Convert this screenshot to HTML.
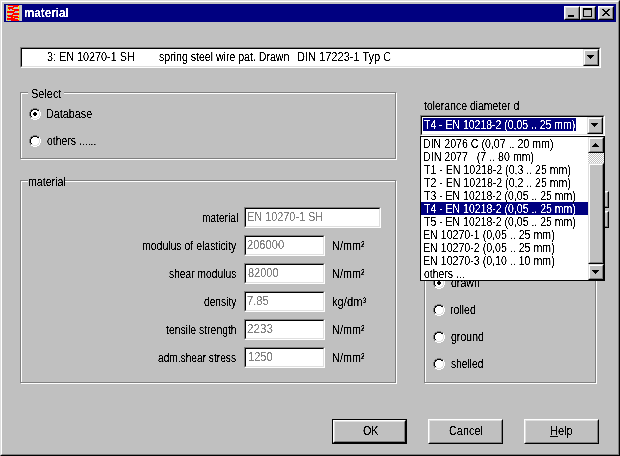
<!DOCTYPE html><html><head><meta charset="utf-8"><title>material</title><style>
html,body{margin:0;padding:0;background:#c0c0c0;}
body{width:620px;height:456px;position:relative;overflow:hidden;font-family:"Liberation Sans",sans-serif;font-size:11px;line-height:13px;color:#000;}
.a{position:absolute;box-sizing:border-box;}
.t{position:absolute;white-space:pre;height:14px;line-height:14px;font-size:12px;}
.t>span{display:inline-block;transform-origin:0 0;white-space:pre;}
.b{font-weight:bold;}
.t{filter:url(#bw);}
.win{left:0;top:0;width:620px;height:456px;background:#c0c0c0;border-style:solid;border-width:1px;border-color:#dfdfdf #000 #000 #dfdfdf;}
.win2{left:1px;top:1px;width:618px;height:454px;border-style:solid;border-width:1px;border-color:#fff #808080 #808080 #fff;}
.title{left:4px;top:4px;width:612px;height:18px;background:#000080;}
.cb{width:16px;height:14px;background:#c0c0c0;border-style:solid;border-width:1px;border-color:#fff #000 #000 #fff;}
.cb i{position:absolute;left:0;top:0;width:12px;height:10px;border-style:solid;border-width:1px;border-color:#dfdfdf #808080 #808080 #dfdfdf;display:block;}
.sunk{border-style:solid;border-width:1px;border-color:#808080 #fff #fff #808080;background:#fff;}
.sunk>i{position:absolute;left:0;top:0;right:0;bottom:0;border-style:solid;border-width:1px;border-color:#000 #dfdfdf #dfdfdf #000;display:block;}
.btn{background:#c0c0c0;border-style:solid;border-width:1px;border-color:#fff #000 #000 #fff;}
.btn>i{position:absolute;left:0;top:0;right:0;bottom:0;border-style:solid;border-width:1px;border-color:#dfdfdf #808080 #808080 #dfdfdf;display:block;}
.sbtn{background:#c0c0c0;border-style:solid;border-width:1px;border-color:#dfdfdf #000 #000 #dfdfdf;}
.sbtn>i{position:absolute;left:0;top:0;right:0;bottom:0;border-style:solid;border-width:1px;border-color:#fff #808080 #808080 #fff;display:block;}
.grp{border:1px solid #808080;box-shadow:1px 1px 0 #fff, inset 1px 1px 0 #fff;}
.gl{background:#c0c0c0;height:3px;}
.sel{background:#000080;}
.track{background-image:conic-gradient(#fff 25%,#c0c0c0 0 50%,#fff 0 75%,#c0c0c0 0);background-size:2px 2px;}
svg{position:absolute;display:block;}
</style></head><body>
<svg width="0" height="0" style="position:absolute"><filter id="bw" x="-2%" y="-10%" width="104%" height="120%" color-interpolation-filters="sRGB"><feComponentTransfer><feFuncA type="linear" slope="5" intercept="-1.7"/></feComponentTransfer></filter></svg>
<div class="a win"></div><div class="a win2"></div>
<div class="a title"></div>
<svg style="left:6px;top:5px" width="16" height="16" viewBox="0 0 16 16" shape-rendering="crispEdges"><rect width="16" height="16" fill="#ff0000"/><rect x="0" y="0" width="1" height="1" fill="#c8c8c8"/><rect x="1" y="0" width="1" height="1" fill="#b4b4b8"/><rect x="13" y="0" width="1" height="1" fill="#b4b4b8"/><rect x="14" y="0" width="2" height="1" fill="#c8c8c8"/><rect x="0" y="1" width="1" height="1" fill="#c8c8c8"/><rect x="1" y="1" width="1" height="1" fill="#b4b4b8"/><rect x="2" y="1" width="1" height="1" fill="#ffff00"/><rect x="3" y="1" width="4" height="1" fill="#b4c4d4"/><rect x="12" y="1" width="1" height="1" fill="#ffff00"/><rect x="13" y="1" width="1" height="1" fill="#b4b4b8"/><rect x="14" y="1" width="2" height="1" fill="#c8c8c8"/><rect x="0" y="2" width="1" height="1" fill="#c8c8c8"/><rect x="1" y="2" width="1" height="1" fill="#b4b4b8"/><rect x="8" y="2" width="4" height="1" fill="#b4c4d4"/><rect x="12" y="2" width="1" height="1" fill="#ffff00"/><rect x="13" y="2" width="1" height="1" fill="#b4b4b8"/><rect x="14" y="2" width="2" height="1" fill="#c8c8c8"/><rect x="0" y="3" width="1" height="1" fill="#c8c8c8"/><rect x="1" y="3" width="1" height="1" fill="#b4b4b8"/><rect x="7" y="3" width="1" height="1" fill="#ffff00"/><rect x="8" y="3" width="4" height="1" fill="#b4c4d4"/><rect x="12" y="3" width="1" height="1" fill="#ffff00"/><rect x="13" y="3" width="1" height="1" fill="#b4b4b8"/><rect x="14" y="3" width="2" height="1" fill="#c8c8c8"/><rect x="0" y="4" width="1" height="1" fill="#c8c8c8"/><rect x="1" y="4" width="1" height="1" fill="#b4b4b8"/><rect x="2" y="4" width="1" height="1" fill="#ffff00"/><rect x="4" y="4" width="2" height="1" fill="#b4c4d4"/><rect x="13" y="4" width="1" height="1" fill="#b4b4b8"/><rect x="14" y="4" width="2" height="1" fill="#c8c8c8"/><rect x="0" y="5" width="1" height="1" fill="#c8c8c8"/><rect x="1" y="5" width="1" height="1" fill="#b4b4b8"/><rect x="2" y="5" width="1" height="1" fill="#ffff00"/><rect x="3" y="5" width="4" height="1" fill="#b4c4d4"/><rect x="7" y="5" width="1" height="1" fill="#ffff00"/><rect x="13" y="5" width="1" height="1" fill="#b4b4b8"/><rect x="14" y="5" width="2" height="1" fill="#c8c8c8"/><rect x="0" y="6" width="1" height="1" fill="#c8c8c8"/><rect x="9" y="6" width="3" height="1" fill="#b4c4d4"/><rect x="12" y="6" width="1" height="1" fill="#ffff00"/><rect x="13" y="6" width="1" height="1" fill="#b4b4b8"/><rect x="14" y="6" width="2" height="1" fill="#c8c8c8"/><rect x="0" y="7" width="1" height="1" fill="#c8c8c8"/><rect x="8" y="7" width="4" height="1" fill="#b4c4d4"/><rect x="12" y="7" width="1" height="1" fill="#ffff00"/><rect x="13" y="7" width="1" height="1" fill="#b4b4b8"/><rect x="14" y="7" width="2" height="1" fill="#c8c8c8"/><rect x="0" y="8" width="1" height="1" fill="#c8c8c8"/><rect x="1" y="8" width="1" height="1" fill="#b4b4b8"/><rect x="2" y="8" width="1" height="1" fill="#ffff00"/><rect x="3" y="8" width="4" height="1" fill="#b4c4d4"/><rect x="13" y="8" width="1" height="1" fill="#b4b4b8"/><rect x="14" y="8" width="2" height="1" fill="#c8c8c8"/><rect x="0" y="9" width="1" height="1" fill="#c8c8c8"/><rect x="1" y="9" width="1" height="1" fill="#b4b4b8"/><rect x="2" y="9" width="1" height="1" fill="#ffff00"/><rect x="3" y="9" width="3" height="1" fill="#b4c4d4"/><rect x="13" y="9" width="1" height="1" fill="#b4b4b8"/><rect x="14" y="9" width="2" height="1" fill="#c8c8c8"/><rect x="0" y="10" width="1" height="1" fill="#c8c8c8"/><rect x="7" y="10" width="1" height="1" fill="#ffff00"/><rect x="8" y="10" width="4" height="1" fill="#b4c4d4"/><rect x="12" y="10" width="1" height="1" fill="#ffff00"/><rect x="13" y="10" width="1" height="1" fill="#b4b4b8"/><rect x="14" y="10" width="2" height="1" fill="#c8c8c8"/><rect x="0" y="11" width="1" height="1" fill="#c8c8c8"/><rect x="1" y="11" width="1" height="1" fill="#b4b4b8"/><rect x="12" y="11" width="1" height="1" fill="#ffff00"/><rect x="13" y="11" width="1" height="1" fill="#b4b4b8"/><rect x="14" y="11" width="2" height="1" fill="#c8c8c8"/><rect x="0" y="12" width="1" height="1" fill="#c8c8c8"/><rect x="1" y="12" width="1" height="1" fill="#b4b4b8"/><rect x="2" y="12" width="1" height="1" fill="#ffff00"/><rect x="3" y="12" width="2" height="1" fill="#b4c4d4"/><rect x="7" y="12" width="1" height="1" fill="#ffff00"/><rect x="13" y="12" width="1" height="1" fill="#b4b4b8"/><rect x="14" y="12" width="2" height="1" fill="#c8c8c8"/><rect x="0" y="13" width="1" height="1" fill="#c8c8c8"/><rect x="9" y="13" width="3" height="1" fill="#b4c4d4"/><rect x="12" y="13" width="1" height="1" fill="#ffff00"/><rect x="13" y="13" width="1" height="1" fill="#b4b4b8"/><rect x="14" y="13" width="2" height="1" fill="#c8c8c8"/><rect x="0" y="14" width="1" height="1" fill="#c8c8c8"/><rect x="12" y="14" width="1" height="1" fill="#ffff00"/><rect x="13" y="14" width="1" height="1" fill="#b4b4b8"/><rect x="14" y="14" width="2" height="1" fill="#c8c8c8"/><rect x="0" y="15" width="1" height="1" fill="#c8c8c8"/><rect x="1" y="15" width="1" height="1" fill="#b4b4b8"/><rect x="2" y="15" width="1" height="1" fill="#ffff00"/><rect x="3" y="15" width="2" height="1" fill="#b4c4d4"/><rect x="13" y="15" width="1" height="1" fill="#b4b4b8"/><rect x="14" y="15" width="2" height="1" fill="#c8c8c8"/></svg>
<span id="t0" class="t b" style="left:24.00px;top:6.00px;color:#fff;"><span style="transform:scaleX(0.9703)">material</span></span>
<div class="a cb" style="left:564px;top:6px"><i></i><svg style="left:3px;top:8px" width="6" height="2"><rect width="6" height="2" fill="#000"/></svg></div>
<div class="a cb" style="left:580px;top:6px"><i></i><svg style="left:2px;top:1px" width="9" height="9" shape-rendering="crispEdges"><rect x="0" y="0" width="9" height="9" fill="#000"/><rect x="1" y="2" width="7" height="6" fill="#c0c0c0"/></svg></div>
<div class="a cb" style="left:598px;top:6px"><i></i><svg style="left:3px;top:2px" width="8" height="7" shape-rendering="crispEdges"><path d="M0 0h2v1h-2zM6 0h2v1h-2zM1 1h2v1h-2zM5 1h2v1h-2zM2 2h4v1h-4zM3 3h2v1h-2zM2 4h4v1h-4zM1 5h2v1h-2zM5 5h2v1h-2zM0 6h2v1h-2zM6 6h2v1h-2z" fill="#000"/></svg></div>
<div class="a sunk" style="left:20px;top:47px;width:581px;height:21px"><i></i></div>
<div class="a sbtn" style="left:583px;top:49px;width:16px;height:17px"><i></i><svg style="left:3px;top:5px" width="7" height="4" shape-rendering="crispEdges"><path d="M0 0h7v1h-7zM1 1h5v1h-5zM2 2h3v1h-3zM3 3h1v1h-1z" fill="#000"/></svg></div>
<span id="t1" class="t" style="left:47.00px;top:50.00px;color:#000;"><span style="transform:scaleX(0.9011)">3: EN 10270-1 SH</span></span>
<span id="t2" class="t" style="left:159.00px;top:50.00px;color:#000;"><span style="transform:scaleX(0.8800)">spring steel wire pat. Drawn</span></span>
<span id="t3" class="t" style="left:296.50px;top:50.00px;color:#000;"><span style="transform:scaleX(0.9200)">DIN 17223-1 Typ C</span></span>
<div class="a grp" style="left:20px;top:92px;width:376px;height:67px"></div>
<div class="a gl" style="left:28px;top:91px;width:36px"></div>
<span id="t4" class="t" style="left:31.00px;top:87.00px;color:#000;"><span style="transform:scaleX(0.9118)">Select</span></span>
<svg style="left:29px;top:108px" width="12" height="12" viewBox="0 0 12 12" shape-rendering="crispEdges"><path d="M4 0h4v1h-4zM2 1h2v1h-2zM8 1h2v1h-2zM1 2h1v2h-1zM0 4h1v4h-1zM1 8h1v2h-1z" fill="#808080"/><path d="M4 1h4v1h-4zM2 2h2v1h-2zM8 2h2v1h-2zM2 3h1v1h-1zM1 4h1v4h-1zM2 8h1v1h-1z" fill="#000"/><path d="M4 11h4v1h-4zM2 10h2v1h-2zM8 10h2v1h-2zM10 8h1v2h-1zM11 4h1v4h-1zM10 2h1v2h-1z" fill="#fff"/><path d="M4 10h4v1h-4zM2 9h2v1h-2zM8 9h2v1h-2zM9 8h1v1h-1zM10 4h1v4h-1zM9 3h1v1h-1z" fill="#dfdfdf"/><path d="M4 2h4v1h-4zM3 3h6v1h-6zM2 4h8v4h-8zM3 8h6v1h-6zM4 9h4v1h-4z" fill="#fff"/><path d="M5 4h2v1h-2zM4 5h4v2h-4zM5 7h2v1h-2z" fill="#000"/></svg>
<svg style="left:29px;top:135px" width="12" height="12" viewBox="0 0 12 12" shape-rendering="crispEdges"><path d="M4 0h4v1h-4zM2 1h2v1h-2zM8 1h2v1h-2zM1 2h1v2h-1zM0 4h1v4h-1zM1 8h1v2h-1z" fill="#808080"/><path d="M4 1h4v1h-4zM2 2h2v1h-2zM8 2h2v1h-2zM2 3h1v1h-1zM1 4h1v4h-1zM2 8h1v1h-1z" fill="#000"/><path d="M4 11h4v1h-4zM2 10h2v1h-2zM8 10h2v1h-2zM10 8h1v2h-1zM11 4h1v4h-1zM10 2h1v2h-1z" fill="#fff"/><path d="M4 10h4v1h-4zM2 9h2v1h-2zM8 9h2v1h-2zM9 8h1v1h-1zM10 4h1v4h-1zM9 3h1v1h-1z" fill="#dfdfdf"/><path d="M4 2h4v1h-4zM3 3h6v1h-6zM2 4h8v4h-8zM3 8h6v1h-6zM4 9h4v1h-4z" fill="#fff"/></svg>
<span id="t5" class="t" style="left:46.00px;top:107.00px;color:#000;"><span style="transform:scaleX(0.9001)">Database</span></span>
<span id="t6" class="t" style="left:46.50px;top:134.00px;color:#000;"><span style="transform:scaleX(0.8710)">others ......</span></span>
<div class="a grp" style="left:20px;top:180px;width:376px;height:203px"></div>
<div class="a gl" style="left:28px;top:179px;width:37px"></div>
<span id="t7" class="t" style="left:27.80px;top:175.00px;color:#000;"><span style="transform:scaleX(0.8852)">material</span></span>
<div class="a sunk" style="left:244px;top:207px;width:137px;height:21px"><i></i></div>
<span id="t8" class="t" style="left:202.00px;top:211.00px;color:#000;"><span style="transform:scaleX(0.8467)">material</span></span>
<span id="t9" class="t" style="left:246.50px;top:210.00px;color:#808080;"><span style="transform:scaleX(0.9069)">EN 10270-1 SH</span></span>
<div class="a sunk" style="left:244px;top:235px;width:81px;height:21px"><i></i></div>
<span id="t10" class="t" style="left:141.50px;top:239.00px;color:#000;"><span style="transform:scaleX(0.8730)">modulus of elasticity</span></span>
<span id="t11" class="t" style="left:246.50px;top:238.00px;color:#808080;"><span style="transform:scaleX(0.9261)">206000</span></span>
<span id="t12" class="t" style="left:332.00px;top:239.00px;color:#000;"><span style="transform:scaleX(0.9089)">N/mm²</span></span>
<div class="a sunk" style="left:244px;top:263px;width:81px;height:21px"><i></i></div>
<span id="t13" class="t" style="left:169.00px;top:267.00px;color:#000;"><span style="transform:scaleX(0.8553)">shear modulus</span></span>
<span id="t14" class="t" style="left:247.50px;top:266.00px;color:#808080;"><span style="transform:scaleX(0.9169)">82000</span></span>
<span id="t15" class="t" style="left:332.00px;top:267.00px;color:#000;"><span style="transform:scaleX(0.9089)">N/mm²</span></span>
<div class="a sunk" style="left:244px;top:291px;width:81px;height:21px"><i></i></div>
<span id="t16" class="t" style="left:203.50px;top:295.00px;color:#000;"><span style="transform:scaleX(0.8520)">density</span></span>
<span id="t17" class="t" style="left:246.50px;top:294.00px;color:#808080;"><span style="transform:scaleX(0.9338)">7.85</span></span>
<span id="t18" class="t" style="left:332.00px;top:295.00px;color:#000;"><span style="transform:scaleX(0.9368)">kg/dm³</span></span>
<div class="a sunk" style="left:244px;top:319px;width:81px;height:21px"><i></i></div>
<span id="t19" class="t" style="left:166.00px;top:323.00px;color:#000;"><span style="transform:scaleX(0.8682)">tensile strength</span></span>
<span id="t20" class="t" style="left:246.50px;top:322.00px;color:#808080;"><span style="transform:scaleX(0.9688)">2233</span></span>
<span id="t21" class="t" style="left:332.00px;top:323.00px;color:#000;"><span style="transform:scaleX(0.9089)">N/mm²</span></span>
<div class="a sunk" style="left:244px;top:347px;width:81px;height:21px"><i></i></div>
<span id="t22" class="t" style="left:158.00px;top:351.00px;color:#000;"><span style="transform:scaleX(0.8474)">adm.shear stress</span></span>
<span id="t23" class="t" style="left:247.50px;top:350.00px;color:#808080;"><span style="transform:scaleX(0.9200)">1250</span></span>
<span id="t24" class="t" style="left:332.00px;top:351.00px;color:#000;"><span style="transform:scaleX(0.9089)">N/mm²</span></span>
<span id="t25" class="t" style="left:424.00px;top:99.00px;color:#000;"><span style="transform:scaleX(0.8708)">tolerance diameter d</span></span>
<div class="a grp" style="left:424px;top:240px;width:172px;height:143px"></div>
<svg style="left:433px;top:277px" width="12" height="12" viewBox="0 0 12 12" shape-rendering="crispEdges"><path d="M4 0h4v1h-4zM2 1h2v1h-2zM8 1h2v1h-2zM1 2h1v2h-1zM0 4h1v4h-1zM1 8h1v2h-1z" fill="#808080"/><path d="M4 1h4v1h-4zM2 2h2v1h-2zM8 2h2v1h-2zM2 3h1v1h-1zM1 4h1v4h-1zM2 8h1v1h-1z" fill="#000"/><path d="M4 11h4v1h-4zM2 10h2v1h-2zM8 10h2v1h-2zM10 8h1v2h-1zM11 4h1v4h-1zM10 2h1v2h-1z" fill="#fff"/><path d="M4 10h4v1h-4zM2 9h2v1h-2zM8 9h2v1h-2zM9 8h1v1h-1zM10 4h1v4h-1zM9 3h1v1h-1z" fill="#dfdfdf"/><path d="M4 2h4v1h-4zM3 3h6v1h-6zM2 4h8v4h-8zM3 8h6v1h-6zM4 9h4v1h-4z" fill="#fff"/><path d="M5 4h2v1h-2zM4 5h4v2h-4zM5 7h2v1h-2z" fill="#000"/></svg>
<span id="t26" class="t" style="left:451.00px;top:276.00px;color:#000;"><span style="transform:scaleX(0.8800)">drawn</span></span>
<svg style="left:433px;top:304px" width="12" height="12" viewBox="0 0 12 12" shape-rendering="crispEdges"><path d="M4 0h4v1h-4zM2 1h2v1h-2zM8 1h2v1h-2zM1 2h1v2h-1zM0 4h1v4h-1zM1 8h1v2h-1z" fill="#808080"/><path d="M4 1h4v1h-4zM2 2h2v1h-2zM8 2h2v1h-2zM2 3h1v1h-1zM1 4h1v4h-1zM2 8h1v1h-1z" fill="#000"/><path d="M4 11h4v1h-4zM2 10h2v1h-2zM8 10h2v1h-2zM10 8h1v2h-1zM11 4h1v4h-1zM10 2h1v2h-1z" fill="#fff"/><path d="M4 10h4v1h-4zM2 9h2v1h-2zM8 9h2v1h-2zM9 8h1v1h-1zM10 4h1v4h-1zM9 3h1v1h-1z" fill="#dfdfdf"/><path d="M4 2h4v1h-4zM3 3h6v1h-6zM2 4h8v4h-8zM3 8h6v1h-6zM4 9h4v1h-4z" fill="#fff"/></svg>
<span id="t27" class="t" style="left:450.00px;top:303.00px;color:#000;"><span style="transform:scaleX(0.8800)">rolled</span></span>
<svg style="left:433px;top:331px" width="12" height="12" viewBox="0 0 12 12" shape-rendering="crispEdges"><path d="M4 0h4v1h-4zM2 1h2v1h-2zM8 1h2v1h-2zM1 2h1v2h-1zM0 4h1v4h-1zM1 8h1v2h-1z" fill="#808080"/><path d="M4 1h4v1h-4zM2 2h2v1h-2zM8 2h2v1h-2zM2 3h1v1h-1zM1 4h1v4h-1zM2 8h1v1h-1z" fill="#000"/><path d="M4 11h4v1h-4zM2 10h2v1h-2zM8 10h2v1h-2zM10 8h1v2h-1zM11 4h1v4h-1zM10 2h1v2h-1z" fill="#fff"/><path d="M4 10h4v1h-4zM2 9h2v1h-2zM8 9h2v1h-2zM9 8h1v1h-1zM10 4h1v4h-1zM9 3h1v1h-1z" fill="#dfdfdf"/><path d="M4 2h4v1h-4zM3 3h6v1h-6zM2 4h8v4h-8zM3 8h6v1h-6zM4 9h4v1h-4z" fill="#fff"/></svg>
<span id="t28" class="t" style="left:451.00px;top:330.00px;color:#000;"><span style="transform:scaleX(0.8800)">ground</span></span>
<svg style="left:433px;top:358px" width="12" height="12" viewBox="0 0 12 12" shape-rendering="crispEdges"><path d="M4 0h4v1h-4zM2 1h2v1h-2zM8 1h2v1h-2zM1 2h1v2h-1zM0 4h1v4h-1zM1 8h1v2h-1z" fill="#808080"/><path d="M4 1h4v1h-4zM2 2h2v1h-2zM8 2h2v1h-2zM2 3h1v1h-1zM1 4h1v4h-1zM2 8h1v1h-1z" fill="#000"/><path d="M4 11h4v1h-4zM2 10h2v1h-2zM8 10h2v1h-2zM10 8h1v2h-1zM11 4h1v4h-1zM10 2h1v2h-1z" fill="#fff"/><path d="M4 10h4v1h-4zM2 9h2v1h-2zM8 9h2v1h-2zM9 8h1v1h-1zM10 4h1v4h-1zM9 3h1v1h-1z" fill="#dfdfdf"/><path d="M4 2h4v1h-4zM3 3h6v1h-6zM2 4h8v4h-8zM3 8h6v1h-6zM4 9h4v1h-4z" fill="#fff"/></svg>
<span id="t29" class="t" style="left:451.00px;top:357.00px;color:#000;"><span style="transform:scaleX(0.8533)">shelled</span></span>
<div class="a" style="left:590px;top:191px;width:19px;height:17px;background:#c0c0c0;border-style:solid;border-width:1px;border-color:#fff #000 #000 #fff;box-shadow:inset -1px -1px 0 #808080, inset 1px 1px 0 #dfdfdf"></div>
<div class="a" style="left:590px;top:211px;width:19px;height:17px;background:#c0c0c0;border-style:solid;border-width:1px;border-color:#fff #000 #000 #fff;box-shadow:inset -1px -1px 0 #808080, inset 1px 1px 0 #dfdfdf"></div>
<div class="a sunk" style="left:420px;top:115px;width:185px;height:21px"><i></i></div>
<div class="a sel" style="left:423px;top:118px;width:153px;height:13px"></div>
<div class="a sbtn" style="left:587px;top:117px;width:16px;height:17px"><i></i><svg style="left:3px;top:5px" width="7" height="4" shape-rendering="crispEdges"><path d="M0 0h7v1h-7zM1 1h5v1h-5zM2 2h3v1h-3zM3 3h1v1h-1z" fill="#000"/></svg></div>
<span id="t30" class="t" style="left:424.00px;top:118.00px;color:#fff;"><span style="transform:scaleX(0.8718)">T4 - EN 10218-2 (0,05 .. 25 mm)</span></span>
<div class="a" style="left:420px;top:136px;width:185px;height:145px;background:#fff;border:1px solid #000"></div>
<div class="a sel" style="left:421px;top:202px;width:167px;height:13px"></div>
<span id="t31" class="t" style="left:423.00px;top:137.00px;color:#000;"><span style="transform:scaleX(0.8854)">DIN 2076 C (0,07 .. 20 mm)</span></span>
<span id="t32" class="t" style="left:423.00px;top:150.00px;color:#000;"><span style="transform:scaleX(0.8866)">DIN 2077   (7 .. 80 mm)</span></span>
<span id="t33" class="t" style="left:424.00px;top:163.00px;color:#000;"><span style="transform:scaleX(0.8812)">T1 - EN 10218-2 (0,3 .. 25 mm)</span></span>
<span id="t34" class="t" style="left:424.00px;top:176.00px;color:#000;"><span style="transform:scaleX(0.8812)">T2 - EN 10218-2 (0,2 .. 25 mm)</span></span>
<span id="t35" class="t" style="left:424.00px;top:189.00px;color:#000;"><span style="transform:scaleX(0.8753)">T3 - EN 10218-2 (0,05 .. 25 mm)</span></span>
<span id="t36" class="t" style="left:424.00px;top:202.00px;color:#fff;"><span style="transform:scaleX(0.8753)">T4 - EN 10218-2 (0,05 .. 25 mm)</span></span>
<span id="t37" class="t" style="left:424.00px;top:215.00px;color:#000;"><span style="transform:scaleX(0.8753)">T5 - EN 10218-2 (0,05 .. 25 mm)</span></span>
<span id="t38" class="t" style="left:423.00px;top:228.00px;color:#000;"><span style="transform:scaleX(0.8856)">EN 10270-1 (0,05 .. 25 mm)</span></span>
<span id="t39" class="t" style="left:423.00px;top:241.00px;color:#000;"><span style="transform:scaleX(0.8856)">EN 10270-2 (0,05 .. 25 mm)</span></span>
<span id="t40" class="t" style="left:423.00px;top:254.00px;color:#000;"><span style="transform:scaleX(0.8856)">EN 10270-3 (0,10 .. 10 mm)</span></span>
<span id="t41" class="t" style="left:424.00px;top:267.00px;color:#000;"><span style="transform:scaleX(0.8714)">others ...</span></span>
<div class="a track" style="left:588px;top:137px;width:16px;height:143px"></div>
<div class="a sbtn" style="left:588px;top:137px;width:16px;height:16px"><i></i><svg style="left:3px;top:5px" width="7" height="4" shape-rendering="crispEdges"><path d="M3 0h1v1h-1zM2 1h3v1h-3zM1 2h5v1h-5zM0 3h7v1h-7z" fill="#000"/></svg></div>
<div class="a sbtn" style="left:588px;top:163px;width:16px;height:101px"><i></i></div>
<div class="a sbtn" style="left:588px;top:264px;width:16px;height:16px"><i></i><svg style="left:3px;top:5px" width="7" height="4" shape-rendering="crispEdges"><path d="M0 0h7v1h-7zM1 1h5v1h-5zM2 2h3v1h-3zM3 3h1v1h-1z" fill="#000"/></svg></div>
<div class="a" style="left:332px;top:419px;width:75px;height:25px;background:#000"></div>
<div class="a btn" style="left:333px;top:420px;width:73px;height:23px"><i></i></div>
<div class="a btn" style="left:428px;top:419px;width:75px;height:25px"><i></i></div>
<div class="a btn" style="left:524px;top:419px;width:75px;height:25px"><i></i></div>
<span id="t42" class="t" style="left:362.50px;top:424.00px;color:#000;"><span style="transform:scaleX(0.8936)">OK</span></span>
<span id="t43" class="t" style="left:448.50px;top:424.00px;color:#000;"><span style="transform:scaleX(0.9081)">Cancel</span></span>
<span id="t44" class="t" style="left:550.00px;top:424.00px;color:#000;"><span style="transform:scaleX(0.9219)"><u>H</u>elp</span></span>
</body></html>
